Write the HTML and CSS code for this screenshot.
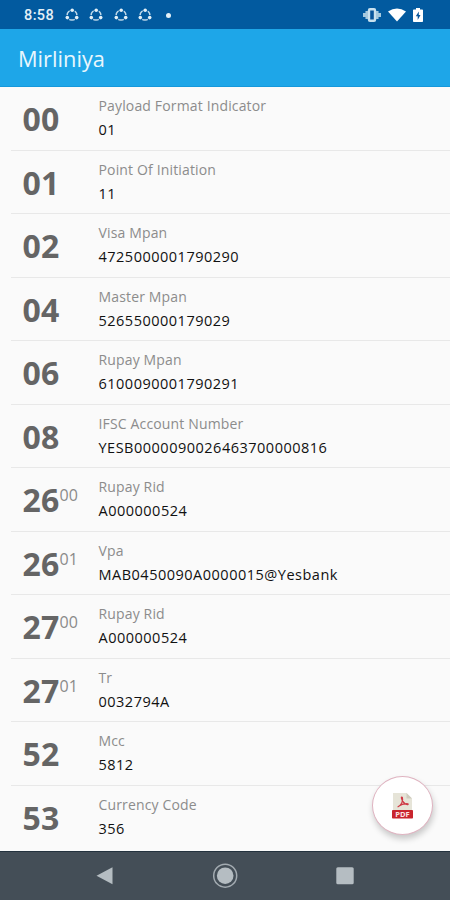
FILE: index.html
```html
<!doctype html>
<html lang="en">
<head>
  <meta charset="UTF-8" />
  <meta name="viewport" content="width=device-width,initial-scale=1" />
  <title>Mirliniya</title>
  <link rel="stylesheet" href="styles.css">
</head>
<body>
  <svg width="0" height="0" class="defs" aria-hidden="true">
    <symbol id="share" viewBox="0 0 14 14">
      <circle cx="7" cy="7.2" r="4.9" fill="none" stroke="currentColor" stroke-width="1.5" stroke-opacity=".85"/>
      <circle cx="7.2" cy="2.2" r="2.6" fill="#025a9f"/>
      <circle cx="2.3" cy="9.6" r="2.6" fill="#025a9f"/>
      <circle cx="11.7" cy="9.6" r="2.6" fill="#025a9f"/>
      <circle cx="7.2" cy="2.2" r="1.8" fill="currentColor"/>
      <circle cx="2.3" cy="9.6" r="1.8" fill="currentColor"/>
      <circle cx="11.7" cy="9.6" r="1.8" fill="currentColor"/>
    </symbol>
  </svg>

  <div class="phone">
    <div class="status">
      <span class="time">8:58</span>
      <div class="notifs">
        <svg><use href="#share"/></svg>
        <svg><use href="#share"/></svg>
        <svg><use href="#share"/></svg>
        <svg><use href="#share"/></svg>
      </div>
      <span class="dot"></span>
      <div class="system">
        <svg class="vibrate" viewBox="0 0 18 14">
          <path d="M3.700 3v8M1.200 5v4M14.300 3v8M16.800 5v4" stroke="#a5c9de" stroke-width="2.500"/>
          <rect x="6" y="1.200" width="6" height="11.600" rx="1" fill="#08559a" stroke="#c9e1ee" stroke-width="2.400"/>
        </svg>
        <svg class="wifi" viewBox="0 0 18 14"><path d="M0 3.600Q9-2.800 18 3.600L9 13.600z" fill="#fff"/></svg>
        <svg class="battery" viewBox="0 0 10 14">
          <path d="M3 0h4v1.500h2.200q.8 0 .8.8v10.900q0 .8-.8.8H.8q-.8 0-.8-.8V2.300q0-.8.8-.8H3z" fill="#fff"/>
          <path d="M5.800 3.500 2.800 8.300h1.900v3.600l2.800-5H5.800z" fill="#08559a"/>
        </svg>
      </div>
    </div>

    <header class="appbar"><h1>Mirliniya</h1></header>

    <main class="list">
      <div class="row"><div class="tag">00</div><div class="info"><span class="label">Payload Format Indicator</span><span class="value">01</span></div></div>
      <div class="row"><div class="tag">01</div><div class="info"><span class="label">Point Of Initiation</span><span class="value">11</span></div></div>
      <div class="row"><div class="tag">02</div><div class="info"><span class="label">Visa Mpan</span><span class="value">4725000001790290</span></div></div>
      <div class="row"><div class="tag">04</div><div class="info"><span class="label">Master Mpan</span><span class="value">526550000179029</span></div></div>
      <div class="row"><div class="tag">06</div><div class="info"><span class="label">Rupay Mpan</span><span class="value">6100090001790291</span></div></div>
      <div class="row"><div class="tag">08</div><div class="info"><span class="label">IFSC Account Number</span><span class="value">YESB0000090026463700000816</span></div></div>
      <div class="row"><div class="tag">26<sup>00</sup></div><div class="info"><span class="label">Rupay Rid</span><span class="value">A000000524</span></div></div>
      <div class="row"><div class="tag">26<sup>01</sup></div><div class="info"><span class="label">Vpa</span><span class="value">MAB0450090A0000015@Yesbank</span></div></div>
      <div class="row"><div class="tag">27<sup>00</sup></div><div class="info"><span class="label">Rupay Rid</span><span class="value">A000000524</span></div></div>
      <div class="row"><div class="tag">27<sup>01</sup></div><div class="info"><span class="label">Tr</span><span class="value">0032794A</span></div></div>
      <div class="row"><div class="tag">52</div><div class="info"><span class="label">Mcc</span><span class="value">5812</span></div></div>
      <div class="row"><div class="tag">53</div><div class="info"><span class="label">Currency Code</span><span class="value">356</span></div></div>
    </main>

    <button class="fab" aria-label="Export">
      <svg viewBox="0 0 22 26">
        <path d="M1 0h13.500L20 5.500V18H1z" fill="#e6e4d8"/>
        <path d="M14.500 0 20 5.500h-5.500z" fill="#cfcbbd"/>
        <path d="M6 13.800c3-1.600 5.500-5.600 4.400-9.200-.2-.9-1.300-.6-1 .4.800 3.300 3 5.900 6 6.600 1 .2 1-1 0-1-3.400-.1-6.600.9-9 2.800" fill="none" stroke="#cf3a46" stroke-width="1.200" stroke-linecap="round"/>
        <rect x="0" y="17" width="21" height="8.500" rx=".8" fill="#c9252d"/>
        <text x="10.500" y="23.900" text-anchor="middle">PDF</text>
      </svg>
    </button>

    <nav class="navbar">
      <svg viewBox="0 0 26 26"><path d="M4.500 12.700 20.500 4.200v17z" fill="#b5bdc2"/></svg>
      <svg viewBox="0 0 26 26"><circle cx="13.200" cy="12.700" r="11.500" fill="none" stroke="#a3abb1" stroke-width="1.500"/><circle cx="13.200" cy="12.700" r="8.300" fill="#b5bdc2"/></svg>
      <svg viewBox="0 0 26 26"><rect x="4.300" y="4.300" width="17.400" height="17" rx="1.500" fill="#b5bdc2"/></svg>
    </nav>
  </div>
</body>
</html>
```
FILE: styles.css
```css
*{ box-sizing:border-box; }
body{
  margin:0;
  background:#fafafa;
  font-family:"Open Sans", "Noto Sans", sans-serif;
}
.defs{ position:absolute; }
.phone{
  position:relative;
  width:450px; height:900px;
  display:flex;
  flex-direction:column;
  overflow:hidden;
}
.status{
  flex:none;
  height:29px;
  padding:1px 27px 0 24px;
  display:flex;
  align-items:center;
  background:#025a9f;
  color:#e3f0f7;
}
.time{
  width:41px;
  padding-top:3px;
  font:500 14.5px/1 Roboto, sans-serif;
  letter-spacing:.4px;
}
.notifs{ display:flex; gap:10.3px; }
.notifs svg{ width:14px; height:14px; }
.dot{
  width:5px; height:5px;
  margin-left:14px;
  border-radius:50%;
  background:#e3f0f7;
}
.system{
  margin-left:auto;
  display:flex;
  align-items:center;
  gap:7px;
}
.system svg{ display:block; height:14px; }
.vibrate, .wifi{ width:18px; }
.battery{ width:10px; }
.appbar{
  flex:none;
  height:58px;
  padding:2px 18px 0;
  display:flex;
  align-items:center;
  background:#1ea6e8;
  border-bottom:1px solid #1598db;
}
.appbar h1{
  margin:0;
  font-size:21.8px;
  font-weight:400;
  line-height:1;
  color:#e9f7fd;
}
.list{
  flex:1;
  padding-left:11px;
}
.row{
  height:63.55px;
  padding-left:11.5px;
  display:flex;
  border-bottom:1px solid #e8e8e8;
}
.row:last-child{ border-bottom:0; }
.tag{
  width:76px;
  padding-top:11px;
  font-size:32px;
  font-weight:700;
  line-height:42px;
  letter-spacing:.2px;
  color:#656565;
  white-space:nowrap;
}
.tag sup{
  font-size:16px;
  font-weight:400;
  line-height:0;
  vertical-align:11px;
  color:#8a8a8a;
}
.info{
  padding-top:7px;
  display:flex;
  flex-direction:column;
}
.label{
  font-size:14px;
  line-height:24px;
  letter-spacing:.15px;
  color:#8c8c8c;
}
.value{
  font-size:14.5px;
  line-height:24px;
  letter-spacing:.5px;
  color:#111;
}
.fab{
  position:absolute;
  right:17px; top:776px;
  width:61px; height:59px;
  padding:0;
  display:grid;
  place-items:center;
  border:1px solid #dfb3c0;
  border-radius:50%;
  background:#fff;
  box-shadow:1px 4px 6px rgba(0,0,0,.2);
}
.fab svg{ width:22px; height:26px; }
.fab text{
  font:700 7.5px "Open Sans", sans-serif;
  fill:#fbe3e3;
}
.navbar{
  flex:none;
  height:49px;
  padding:0 92px;
  display:flex;
  justify-content:space-between;
  align-items:center;
  background:#444e57;
  border-top:1px solid #24323e;
}
.navbar svg{ width:26px; height:26px; }
```
